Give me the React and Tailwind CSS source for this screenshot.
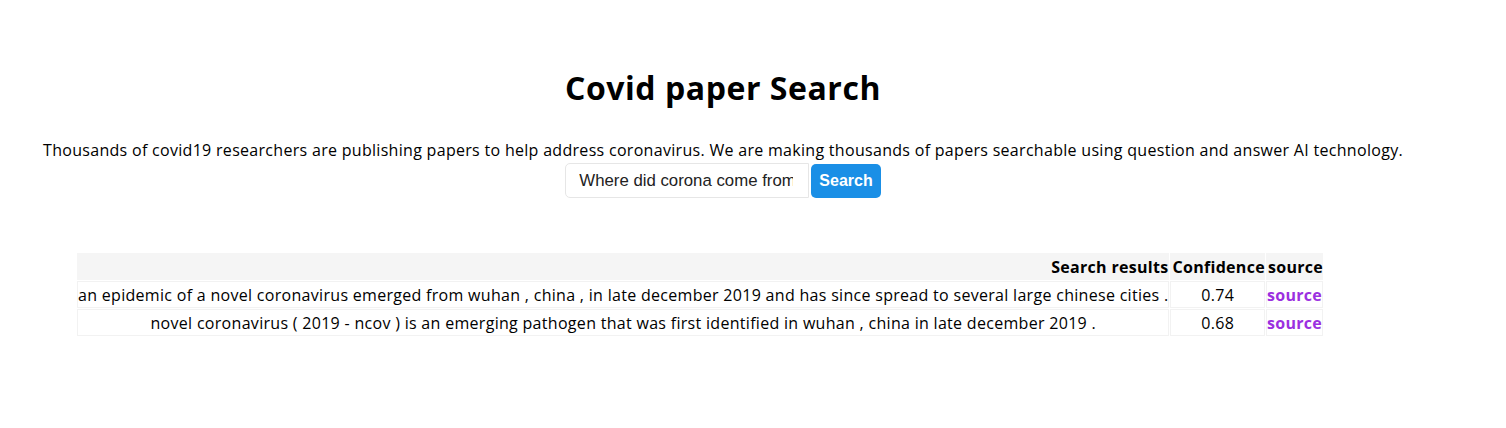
import React, { useState } from "react";

const RESULTS = [
  {
    text: "an epidemic of a novel coronavirus emerged from wuhan , china , in late december 2019 and has since spread to several large chinese cities .",
    confidence: "0.74",
  },
  {
    text: "novel coronavirus ( 2019 - ncov ) is an emerging pathogen that was first identified in wuhan , china in late december 2019 .",
    confidence: "0.68",
  },
];

export default function App() {
  const [query, setQuery] = useState("Where did corona come from");

  return (
    <div className="min-h-[428px] bg-white text-black font-['Open_Sans',sans-serif] tracking-[0.3px]">
      <div className="w-[1446px] text-center pt-[69px]">
        <h1 className="text-[32px] leading-[37px] font-bold tracking-[0.55px]">Covid paper Search</h1>
        <p className="mt-[33px] text-[16px] leading-[22px]">
          Thousands of covid19 researchers are publishing papers to help address coronavirus. We are making thousands of papers searchable using question and answer AI technology.
        </p>
        <div className="mt-[2px] flex justify-center items-center gap-[2px]">
          <input
            value={query}
            onChange={(e) => setQuery(e.target.value)}
            className="w-[244px] h-[35px] pl-[13px] pr-[15px] border border-[#e6e6e6] rounded-l-[5px] text-[16.8px] tracking-normal text-[#222] outline-none font-['Liberation_Sans',sans-serif]"
          />
          <button className="h-[34px] px-[8px] bg-[#1a8fe6] text-white font-bold text-[16px] tracking-normal rounded-[5px] font-['Liberation_Sans',sans-serif]">
            Search
          </button>
        </div>
      </div>

      <table className="mt-[54px] ml-[76px] border-separate border-spacing-[1px] text-[16px] leading-[20px]">
        <thead>
          <tr>
            <th className="bg-[#f5f5f5] text-right pr-[1px] h-[27px]">Search results</th>
            <th className="bg-[#f5f5f5] text-right pl-[2px] h-[27px]">Confidence</th>
            <th className="bg-[#f5f5f5] text-right pl-[1px] h-[27px]">source</th>
          </tr>
        </thead>
        <tbody>
          {RESULTS.map((r) => (
            <tr key={r.confidence}>
              <td className="text-center border border-[#f2f2f2] h-[27px]">{r.text}</td>
              <td className="text-center border border-[#f2f2f2]">{r.confidence}</td>
              <td className="text-center border border-[#f2f2f2]">
                <a href="#" className="font-bold text-[#9b30e0]">source</a>
              </td>
            </tr>
          ))}
        </tbody>
      </table>
    </div>
  );
}
